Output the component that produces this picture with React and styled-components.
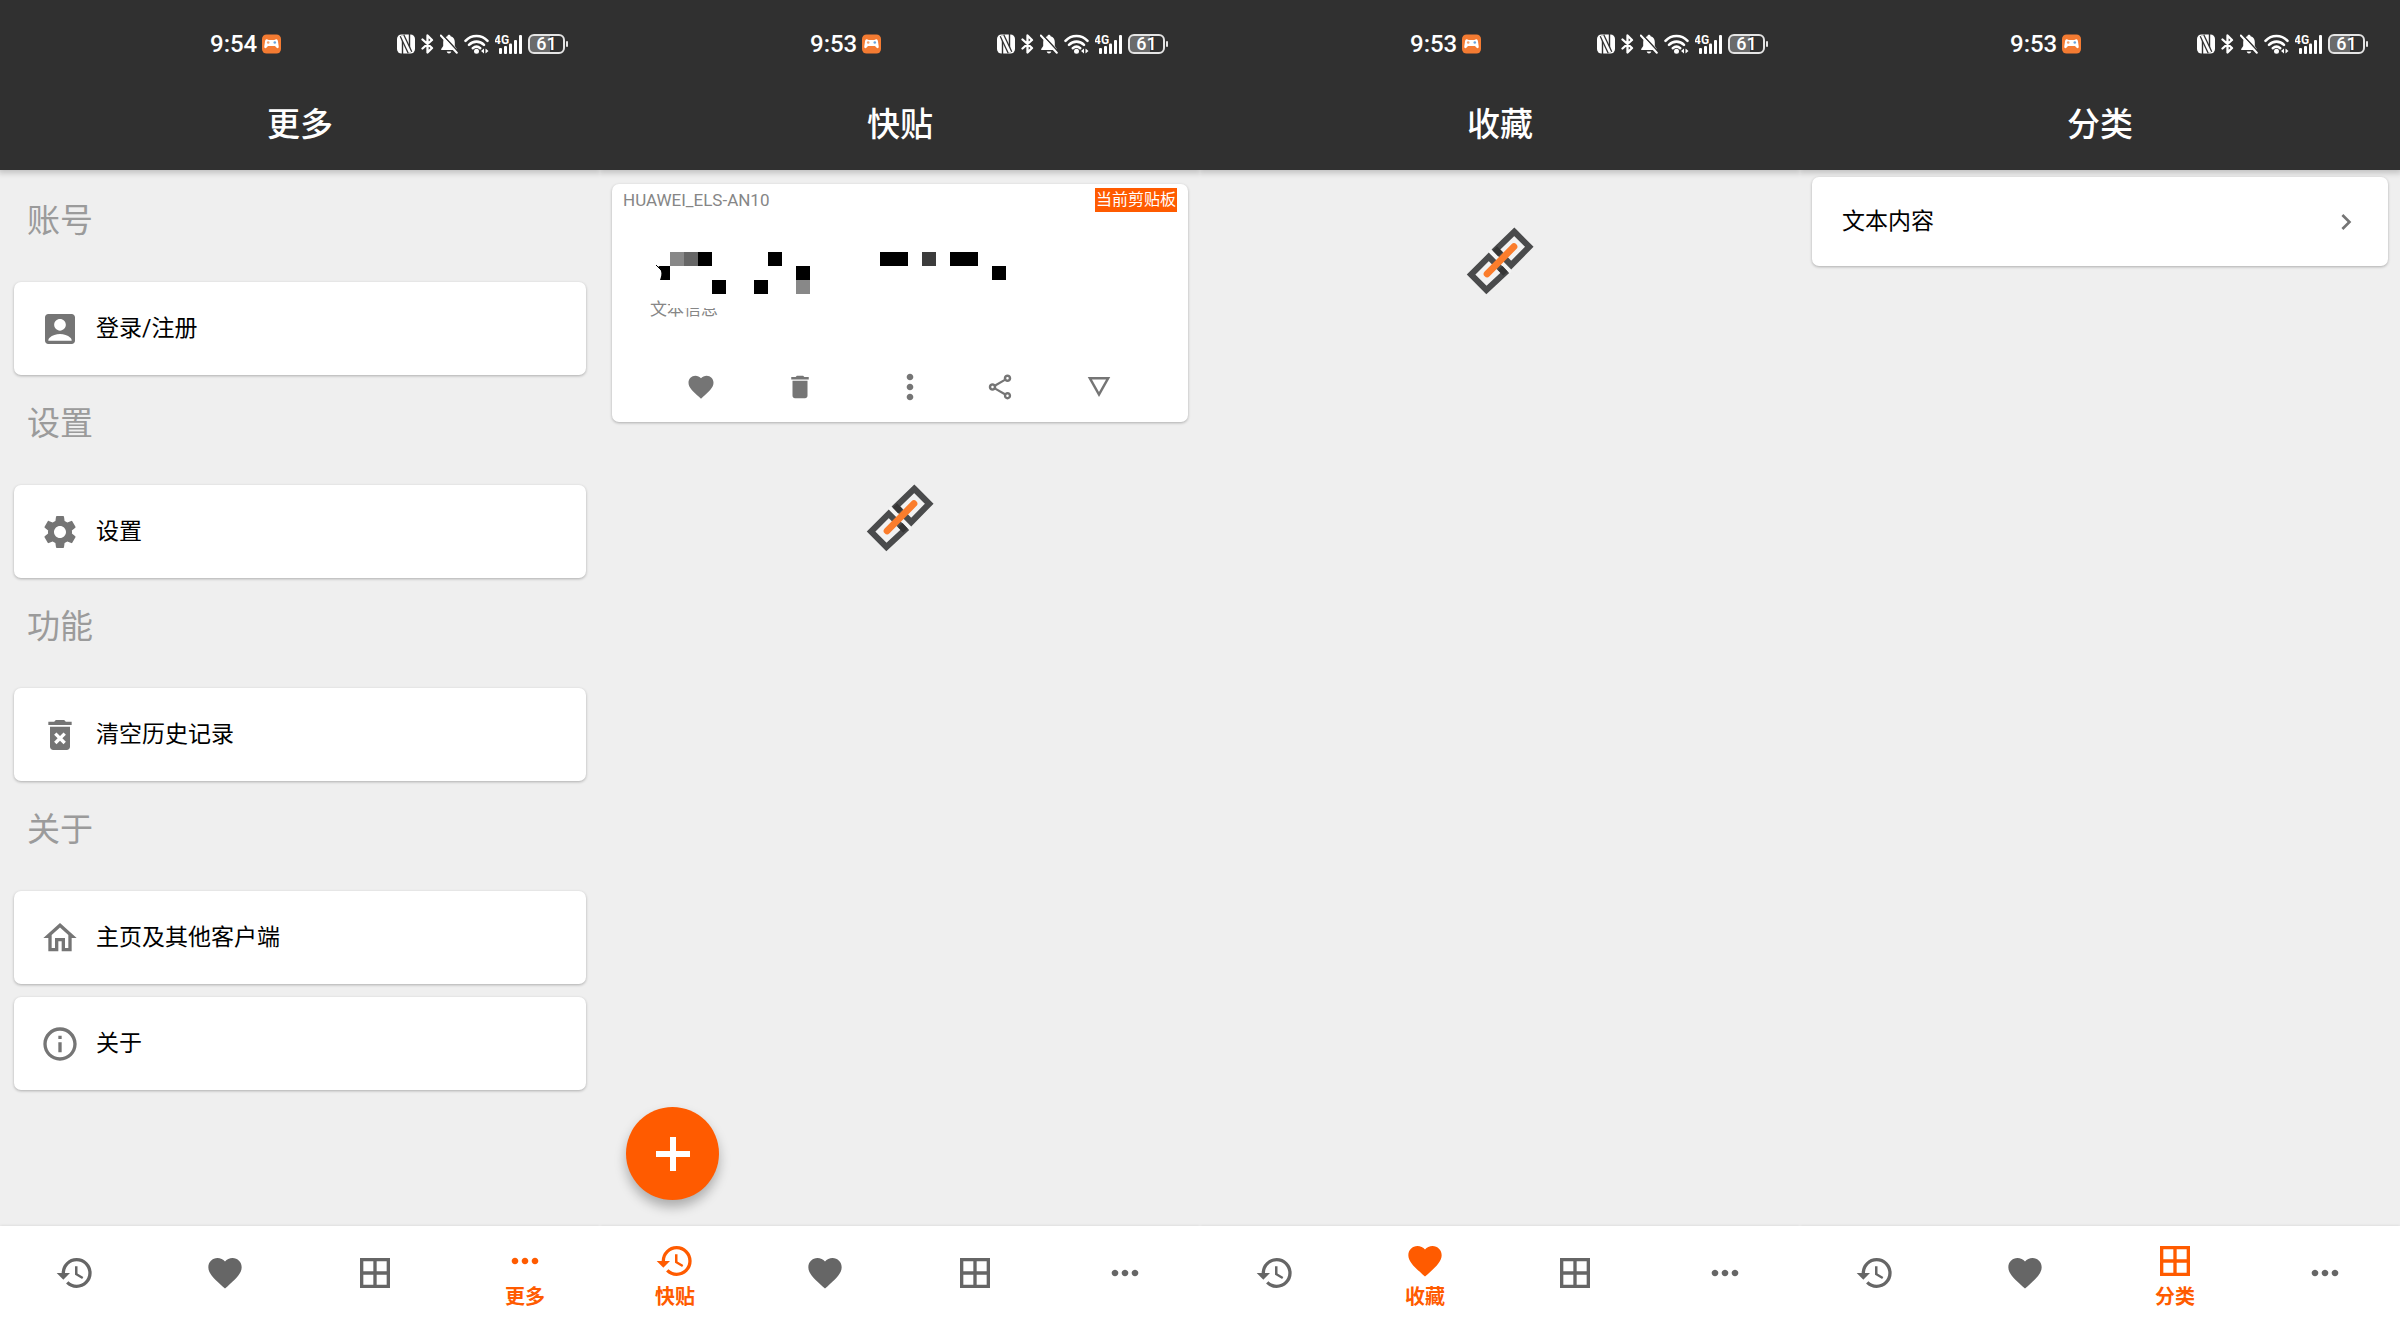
import styled, { createGlobalStyle } from "styled-components";
import {
  MdAccountBox,
  MdBorderAll,
  MdChevronRight,
  MdDelete,
  MdFavorite,
  MdHistory,
  MdMoreHoriz,
  MdMoreVert,
  MdOutlineHome,
  MdOutlineInfo,
  MdOutlineShare,
  MdSettings,
} from "react-icons/md";

const GlobalStyle = createGlobalStyle`
  * {
    box-sizing: border-box;
  }

  body {
    margin: 0;
    background: #efefef;
    color: #000;
    font-family: Roboto, "Noto Sans CJK SC", sans-serif;
  }

  h1, h2, p, ul {
    margin: 0;
    padding: 0;
  }

  svg {
    display: block;
    flex-shrink: 0;
  }
`;

const Screens = styled("div")`
  display: grid;
  grid-template-columns: repeat(4, minmax(0, 1fr));
  min-height: 100vh;
`;

const Phone = styled("section")`
  display: flex;
  flex-direction: column;
  overflow: hidden;
  background: #efefef;
`;

const Header = styled("header")`
  background: #303030;
  color: #fff;
  box-shadow: 0 1px 6px 2px rgba(0, 0, 0, 0.2);
`;

const StatusBar = styled("div")`
  display: flex;
  align-items: center;
  justify-content: space-between;
  height: 88px;
  padding: 0 32px 0 35%;
`;

const StatusGroup = styled("div")`
  display: flex;
  align-items: center;
  gap: ${({ $gap }) => $gap || "6px"};
`;

const Time = styled("span")`
  font-size: 24px;
  font-weight: 500;
  line-height: 28px;
`;

const Battery = styled("span")`
  display: flex;
  align-items: center;
`;

const BatteryBody = styled("span")`
  display: flex;
  align-items: center;
  justify-content: center;
  width: 37px;
  height: 20px;
  border: 2px solid #e4e4e4;
  border-radius: 6px;
  background: linear-gradient(90deg, #6b6b6b 61%, transparent 61%);
  font-size: 18px;
  font-weight: 500;
  line-height: 16px;
`;

const BatteryTip = styled("span")`
  width: 2px;
  height: 6px;
  margin-left: 1px;
  border-radius: 1px;
  background: #e4e4e4;
`;

const Title = styled("h1")`
  padding-bottom: 8px;
  font-size: 33px;
  font-weight: 500;
  line-height: 74px;
  text-align: center;
`;

const Content = styled("main")`
  position: relative;
  display: flex;
  flex: 1;
  flex-direction: column;
  padding: ${({ $padding }) => $padding || "0"};
`;

const SectionLabel = styled("h2")`
  padding: 24px 13px 36px;
  color: #9b9b9b;
  font-size: 33px;
  font-weight: 400;
  line-height: 50px;
`;

const Card = styled("div")`
  border-radius: 7px;
  background: #fff;
  box-shadow: 0 1px 3px rgba(0, 0, 0, 0.28);
`;

const MenuList = styled("div")`
  display: flex;
  flex-direction: column;
  gap: 13px;
`;

const MenuItem = styled(Card).attrs({ as: "button", type: "button" })`
  display: flex;
  align-items: center;
  gap: 16px;
  width: 100%;
  height: 93px;
  padding: 0 26px;
  border: 0;
  color: #000;
  font-family: inherit;
  font-size: 23px;
  line-height: 30px;
  text-align: left;
  cursor: pointer;

  svg {
    color: #757575;
  }
`;

const CategoryItem = styled(MenuItem)`
  justify-content: space-between;
  height: 89px;
  padding-left: 30px;
`;

const ClipCard = styled(Card)`
  margin-bottom: 5px;
  padding: 4px 11px 15px;
`;

const ClipHeader = styled("div")`
  display: flex;
  justify-content: space-between;
  color: #868686;
  font-size: 17px;
  line-height: 24px;
`;

const ClipBadge = styled("span")`
  padding: 0 1px;
  background: #ff5b00;
  color: #fff;
  font-size: 16px;
  line-height: 23px;
`;

const ClipBody = styled("div")`
  position: relative;
  padding: 84px 27px 45px;
  color: #868686;
  font-size: 17px;
  line-height: 26px;
`;

// covers the top of the caption as well as the clip text
const Mosaic = styled("svg")`
  position: absolute;
  top: 40px;
  left: 33px;
`;

const Actions = styled("div")`
  display: grid;
  grid-template-columns: repeat(5, 1fr);
  padding: 0 28px;
`;

const ActionButton = styled("button")`
  display: flex;
  align-items: center;
  justify-content: center;
  height: 40px;
  padding: ${({ $wide }) => ($wide ? "0 0 0 20px" : "0")};
  border: 0;
  background: none;
  color: #757575;
  cursor: pointer;
`;

const Chain = styled("svg")`
  margin: 57px auto 0;
`;

const AddButton = styled("button")`
  position: absolute;
  bottom: 26px;
  left: 26px;
  display: flex;
  align-items: center;
  justify-content: center;
  width: 93px;
  height: 93px;
  border: 0;
  border-radius: 50%;
  background: #ff5b00;
  box-shadow: 0 7px 12px rgba(0, 0, 0, 0.28);
  cursor: pointer;
`;

const Nav = styled("nav")`
  display: grid;
  grid-template-columns: repeat(4, 1fr);
  background: #fff;
  box-shadow: 0 0 3px rgba(0, 0, 0, 0.12);
`;

const NavLink = styled("a")`
  display: flex;
  flex-direction: column;
  align-items: center;
  justify-content: center;
  height: 94px;
  padding-top: ${({ $active }) => ($active ? "8px" : "0")};
  color: ${({ $active }) => ($active ? "#ff5b00" : "#666")};
  font-size: 20px;
  font-weight: 700;
  line-height: 32px;
  text-decoration: none;
`;

const NAV_ITEMS = [
  { id: "clips", label: "快贴", Icon: MdHistory },
  { id: "favorites", label: "收藏", Icon: MdFavorite },
  { id: "categories", label: "分类", Icon: MdBorderAll },
  { id: "more", label: "更多", Icon: MdMoreHoriz },
];

const MENU = [
  { title: "账号", items: [{ text: "登录/注册", Icon: MdAccountBox }] },
  { title: "设置", items: [{ text: "设置", Icon: MdSettings }] },
  { title: "功能", items: [{ text: "清空历史记录", Icon: TrashIcon }] },
  {
    title: "关于",
    items: [
      { text: "主页及其他客户端", Icon: MdOutlineHome },
      { text: "关于", Icon: MdOutlineInfo },
    ],
  },
];

// [column, row, columns wide, colour]
const BLOCKS = [
  [0, 0, 1, "#888"],
  [1, 0, 1, "#666"],
  [2, 0, 1, "#000"],
  [7, 0, 1, "#000"],
  [15, 0, 2, "#000"],
  [18, 0, 1, "#3c3c3c"],
  [20, 0, 2, "#000"],
  [9, 1, 1, "#000"],
  [23, 1, 1, "#000"],
  [3, 2, 1, "#000"],
  [6, 2, 1, "#000"],
  [9, 2, 1, "#888"],
];

function TrashIcon({ size }) {
  return (
    <svg width={size} height={size} viewBox="0 0 24 24" fill="currentColor">
      <path d="M6 19c0 1.1.9 2 2 2h8c1.1 0 2-.9 2-2V7H6v12zm2.46-7.12l1.41-1.41L12 12.59l2.12-2.12 1.41 1.41L13.41 14l2.12 2.12-1.41 1.41L12 15.41l-2.12 2.12-1.41-1.41L10.59 14l-2.13-2.12zM15.5 4l-1-1h-5l-1 1H5v2h14V4z" />
    </svg>
  );
}

const TriangleIcon = () => (
  <svg width="30" height="30" viewBox="0 0 24 24" fill="currentColor">
    <path d="M3 4l9 16 9-16H3zm3.38 2h11.25L12 16 6.38 6z" fillRule="evenodd" />
  </svg>
);

const GameIcon = () => (
  <svg width="19" height="20" viewBox="0 0 19 20">
    <rect width="19" height="19" y="0.5" rx="4.5" fill="#f47b32" />
    <path
      d="M4.5 5.2c1.2-.3 1.8.8 2.9.8h4.2c1.1 0 1.7-1.1 2.9-.8 1 .2 1.3 1.2 1.5 2.3l.7 4.7c.3 2-1.3 2.5-2.3 1.3L13 12H6l-1.400 1.500c-1 1.200-2.600.7-2.300-1.300L3 7.500c.2-1.100.5-2.100 1.500-2.300z"
      fill="#fff"
    />
    <circle cx="6.2" cy="8.5" r="1.3" fill="#f4a26d" />
    <circle cx="12.8" cy="8.5" r="1.3" fill="#6aa5dc" />
  </svg>
);

const NfcIcon = () => (
  <svg width="18" height="20" viewBox="0 0 18 20">
    <rect y="0.5" width="18" height="19" rx="4.500" fill="#fff" />
    <path
      d="M5.500 20V2.500M12.500 0v17.500"
      stroke="#303030"
      strokeWidth="1.400"
      fill="none"
    />
    <path d="M5 1.500L13 18.500" stroke="#303030" strokeWidth="5.200" />
    <path d="M5 1.500L13 18.500" stroke="#fff" strokeWidth="2.600" />
  </svg>
);

const BluetoothIcon = () => (
  <svg width="13" height="20" viewBox="0 0 13 20">
    <path
      d="M1.500 5.500l9.500 8.500-4.500 4.500v-17L11 6l-9.500 8.500"
      fill="none"
      stroke="#fff"
      strokeWidth="2.300"
      strokeLinejoin="round"
      strokeLinecap="round"
    />
  </svg>
);

const BellOffIcon = () => (
  <svg width="18" height="20" viewBox="0 0 18 20">
    <path
      d="M9 .8c.9 0 1.500.6 1.600 1.400 2.700.7 4.200 2.700 4.200 5.700v4.200l2 2.900v1H1.200v-1l2-2.900V7.900c0-3 1.500-5 4.200-5.700C7.500 1.400 8.100.8 9 .8z"
      fill="#fff"
    />
    <path d="M6.700 17.500h4.600c-.3 1.300-1.200 2-2.300 2s-2-.7-2.300-2z" fill="#fff" />
    <path d="M2.200.5l16 17.200" stroke="#303030" strokeWidth="1.600" />
    <path d="M.8 1.500l16 17.200" stroke="#fff" strokeWidth="2" strokeLinecap="round" />
  </svg>
);

const WifiIcon = () => (
  <svg width="25" height="20" viewBox="0 0 25 20" fill="none" stroke="#fff">
    <path d="M1.500 6.800c6-6.400 16-6.400 22 0" strokeWidth="2.600" strokeLinecap="round" />
    <path d="M5 10.800c4.200-4.200 10.800-4.200 15 0" strokeWidth="2.600" strokeLinecap="round" />
    <path d="M8.800 14.200c2.200-1.800 5.200-1.800 7.400 0" strokeWidth="2.600" strokeLinecap="round" />
    <circle cx="12.500" cy="17.200" r="2.500" fill="#fff" stroke="none" />
    <path d="M20 14.500v5l-3-2.500zM21.500 14.500v5l3-2.500z" fill="#fff" stroke="none" />
  </svg>
);

const SignalIcon = () => (
  <svg width="27" height="20" viewBox="0 0 27 20" fill="#fff">
    <text x="-1" y="10" fontSize="12" fontWeight="700">
      4G
    </text>
    <rect x="4" y="14" width="3" height="6" rx="1" />
    <rect x="9" y="12" width="3" height="8" rx="1" />
    <rect x="14" y="9.500" width="3" height="10.500" rx="1" />
    <rect x="19" y="6" width="3" height="14" rx="1" />
    <rect x="24" y="1" width="3" height="19" rx="1" />
  </svg>
);

const ChainIcon = () => (
  <Chain width="68" height="68" viewBox="0 0 200 200" strokeLinejoin="miter">
    <path d="M142 14l44 44-53 54-45-46z" fill="#f2f2f2" stroke="#4a4b4c" strokeWidth="18" />
    <path d="M67 88l47 47-54 50-45-45z" fill="#f2f2f2" stroke="#4a4b4c" strokeWidth="18" />
    <path d="M68 69l64 64" stroke="#f4f4f4" strokeWidth="8" />
    <path d="M85 63l16 17M101 121l15 16" stroke="#353535" strokeWidth="18" />
    <path d="M62 138l79-80" stroke="#fb7d2c" strokeWidth="20" strokeLinecap="round" />
  </Chain>
);

const Screen = ({ time, active, padding, children }) => (
  <Phone>
    <Header>
      <StatusBar>
        <StatusGroup $gap="5px">
          <Time>{time}</Time>
          <GameIcon />
        </StatusGroup>
        <StatusGroup>
          <NfcIcon />
          <BluetoothIcon />
          <BellOffIcon />
          <WifiIcon />
          <SignalIcon />
          <Battery>
            <BatteryBody>61</BatteryBody>
            <BatteryTip />
          </Battery>
        </StatusGroup>
      </StatusBar>
      <Title>{NAV_ITEMS.find(({ id }) => id === active).label}</Title>
    </Header>
    <Content $padding={padding}>{children}</Content>
    <Nav>
      {NAV_ITEMS.map(({ id, label, Icon }) => (
        <NavLink
          key={id}
          href={`#${id}`}
          aria-label={label}
          $active={id === active}
        >
          <Icon size={40} />
          {id === active && <span>{label}</span>}
        </NavLink>
      ))}
    </Nav>
  </Phone>
);

const MoreScreen = () => (
  <Screen time="9:54" active="more" padding="2px 14px 0">
    {MENU.map(({ title, items }) => (
      <div key={title}>
        <SectionLabel>{title}</SectionLabel>
        <MenuList>
          {items.map(({ text, Icon }) => (
            <MenuItem key={text}>
              <Icon size={40} />
              <span>{text}</span>
            </MenuItem>
          ))}
        </MenuList>
      </div>
    ))}
  </Screen>
);

const ClipsScreen = () => (
  <Screen time="9:53" active="clips" padding="14px 12px 0">
    <ClipCard>
      <ClipHeader>
        <span>HUAWEI_ELS-AN10</span>
        <ClipBadge>当前剪贴板</ClipBadge>
      </ClipHeader>
      <ClipBody>
        <p>文本信息</p>
        <Mosaic width="350" height="56" viewBox="0 0 350 56">
          <rect x="14" y="42" width="60" height="14" fill="#fff" />
          <path d="M3 14h11v14H4c1-3 2-6 1-9z" />
          <path d="M0 13l5 5M3 14l1 3" stroke="#000" />
          {BLOCKS.map(([col, row, span, color]) => (
            <rect
              key={`${col}-${row}`}
              x={14 + col * 14}
              y={row * 14}
              width={span * 14}
              height="14"
              fill={color}
            />
          ))}
        </Mosaic>
      </ClipBody>
      <Actions>
        <ActionButton type="button" aria-label="收藏">
          <MdFavorite size={30} />
        </ActionButton>
        <ActionButton type="button" aria-label="删除">
          <MdDelete size={30} />
        </ActionButton>
        <ActionButton type="button" aria-label="更多" $wide>
          <MdMoreVert size={40} />
        </ActionButton>
        <ActionButton type="button" aria-label="分享">
          <MdOutlineShare size={30} />
        </ActionButton>
        <ActionButton type="button" aria-label="展开">
          <TriangleIcon />
        </ActionButton>
      </Actions>
    </ClipCard>
    <ChainIcon />
    <AddButton type="button" aria-label="添加">
      <svg width="34" height="34" viewBox="0 0 34 34" fill="#fff">
        <path d="M14 0h6v14h14v6H20v14h-6V20H0v-6h14z" />
      </svg>
    </AddButton>
  </Screen>
);

const FavoritesScreen = () => (
  <Screen time="9:53" active="favorites">
    <ChainIcon />
  </Screen>
);

const CategoriesScreen = () => (
  <Screen time="9:53" active="categories" padding="7px 12px 0">
    <CategoryItem>
      <span>文本内容</span>
      <MdChevronRight size={32} />
    </CategoryItem>
  </Screen>
);

const App = () => (
  <>
    <GlobalStyle />
    <Screens>
      <MoreScreen />
      <ClipsScreen />
      <FavoritesScreen />
      <CategoriesScreen />
    </Screens>
  </>
);

export default App;
